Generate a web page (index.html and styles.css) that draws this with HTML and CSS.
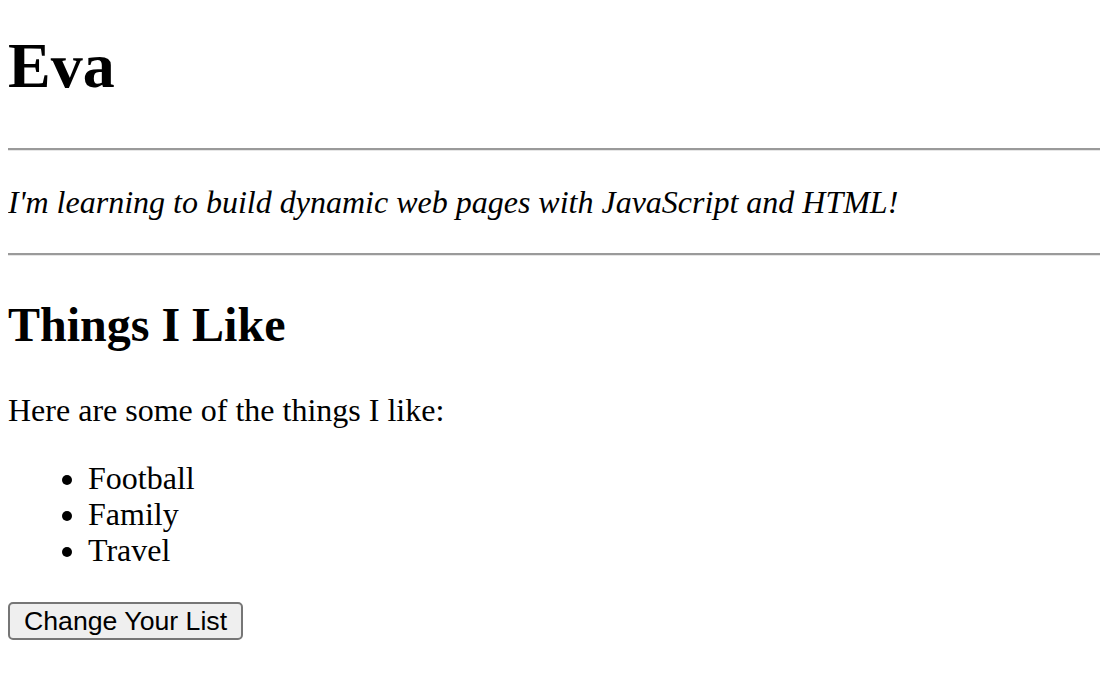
FILE: index.html
```html
<!DOCTYPE html>
<html>
<head>
<meta charset="utf-8">
<link rel="stylesheet" href="styles.css">
</head>
<body class="page">
<h1 class="name">Eva</h1>
<hr class="rule">
<p class="tagline">I'm learning to build dynamic web pages with JavaScript and HTML!</p>
<hr class="rule">
<h2 class="section-title">Things I Like</h2>
<p class="intro">Here are some of the things I like:</p>
<ul class="likes">
<li>Football</li>
<li>Family</li>
<li>Travel</li>
</ul>
<button class="change-btn" type="button">Change Your List</button>
</body>
</html>
```
FILE: styles.css
```css
html { background: #fff; }
.page {
  margin: 8px 0 8px 8px;
  font-family: "Liberation Serif", "Times New Roman", serif;
  font-size: 32px;
  line-height: 36px;
  color: #000;
}
.name {
  font-size: 64px;
  line-height: 74px;
  margin: 21px 0 45px;
  font-weight: bold;
}
.rule {
  box-sizing: border-box;
  display: block;
  border: none;
  border-top: 2px solid #9a9a9a;
  border-bottom: 1px solid #e6e6e6;
  margin: 0;
  height: 3px;
}
.tagline {
  font-style: italic;
  margin: 33px 0;
}
.section-title {
  font-size: 48px;
  line-height: 55px;
  margin: 41px 0 0;
  font-weight: bold;
}
.intro {
  margin: 40px 0 0;
}
.likes {
  margin: 32px 0 0;
  padding-left: 80px;
}
.change-btn {
  margin-top: 34px;
  font-family: "Liberation Sans", Arial, sans-serif;
  font-size: 26.67px;
  padding: 0 14px;
  height: 38px;
  background: #efefef;
  border: 2px solid #767676;
  border-radius: 5px;
  color: #000;
}
```
